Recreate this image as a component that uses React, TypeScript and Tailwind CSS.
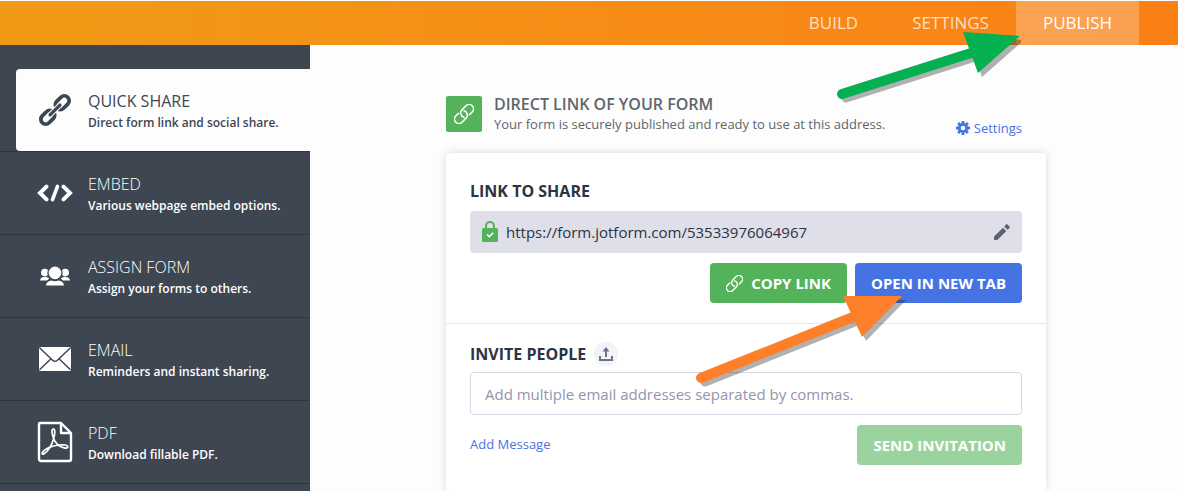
import type { ReactNode } from "react";

type ShareOption = {
  title: string;
  description: string;
  icon: ReactNode;
};

const ChainIcon = () => (
  <svg width="36" height="36" viewBox="-18 -18 36 36" fill="none" aria-hidden="true">
    <g transform="rotate(-45)" stroke="#3e4652">
      <rect x="2.500" y="-4.800" width="15.500" height="9.600" rx="4.800" strokeWidth="3.800" />
      <rect x="-18" y="-4.800" width="15.500" height="9.600" rx="4.800" strokeWidth="3.800" />
      <path d="M-7 0H7" stroke="#fdfdfd" strokeWidth="5.400" strokeLinecap="round" />
      <path d="M-7 0H7" strokeWidth="3.200" strokeLinecap="round" />
    </g>
  </svg>
);

const CodeIcon = () => (
  <svg width="36" height="18" viewBox="0 0 36 18" fill="none" stroke="#fff" strokeWidth="4" strokeLinecap="round" aria-hidden="true">
    <path d="M9.500 2.600 3 9l6.500 6.400M26.500 2.600 33 9l-6.500 6.400" />
    <path d="M20.500 2.400l-5 13.200" strokeWidth="3.600" />
  </svg>
);

const PeopleIcon = () => (
  <svg width="30" height="20" viewBox="0 0 30 20" fill="#fff" aria-hidden="true">
    <circle cx="4.800" cy="6.600" r="3.800" />
    <circle cx="25.200" cy="6.600" r="3.800" />
    <path d="M0 14.600c.3-2.400 1.600-3.500 4.800-3.500 2.200 0 3.500.5 4.300 1.500l-2 2Z" />
    <path d="M30 14.600c-.3-2.400-1.600-3.500-4.800-3.500-2.200 0-3.500.5-4.300 1.500l2 2Z" />
    <circle cx="15" cy="6.900" r="7" stroke="#3e4652" strokeWidth="1.400" />
    <path d="M6 19.500c.4-3.500 2.600-4.600 5.500-5.100 2.200 1.100 4.800 1.100 7 0 2.900.5 5.100 1.600 5.500 5.100Z" />
  </svg>
);

const EnvelopeIcon = () => (
  <svg width="32" height="24" viewBox="0 0 32 24" aria-hidden="true">
    <rect width="32" height="24" rx="1.500" fill="#fff" />
    <path
      d="M.5.8 13.600 13.200q2.400 2.200 4.800 0L31.500.8M.5 22.800l11-10.500M31.500 22.800l-11-10.500"
      fill="none"
      stroke="#3e4652"
      strokeWidth="1.500"
    />
  </svg>
);

const PdfIcon = () => (
  <svg width="36" height="42" viewBox="0 0 36 42" fill="none" stroke="#fff" strokeLinejoin="round" aria-hidden="true">
    <path d="M3 2h21l10 10v26a2 2 0 0 1-2 2H4a2 2 0 0 1-2-2V3a1 1 0 0 1 1-1Z" strokeWidth="2.400" />
    <path d="M24 2v10h10" strokeWidth="2.400" />
    <path
      d="M16.500 8.200c-2 0-1.800 3.200-.8 6.500 1.500 5.500 5.500 11 11.500 12.200 4.600.9 4.700-2.500.5-2.900-6-.5-13.500 1-19.200 4.400-4 2.500-4.200 5.500-1.700 4.500 3.600-1.500 8.200-8.600 10.100-16.200 1-4.200 1.400-8.500-.4-8.500Z"
      strokeWidth="1.700"
    />
  </svg>
);

const LinkIcon = ({ size }: { size: number }) => (
  <svg
    width={size}
    height={size}
    viewBox="-10 -10 20 20"
    fill="none"
    stroke="currentColor"
    strokeWidth="1.600"
    strokeLinecap="round"
    aria-hidden="true"
  >
    <g transform="rotate(-45)">
      <path d="M3.500 4.400H7.200a4.400 4.400 0 0 0 0-8.800H1.500a4.400 4.400 0 0 0-3.800 6.600" />
      <path d="M-3.500-4.400H-7.200a4.400 4.400 0 0 0 0 8.800H-1.500a4.400 4.400 0 0 0 3.800-6.600" />
    </g>
  </svg>
);

const LockIcon = () => (
  <svg width="16" height="22" viewBox="0 0 16 22" fill="none" aria-hidden="true">
    <path d="M4 8V5a4 4 0 0 1 8 0v3" stroke="#54b35a" strokeWidth="2" />
    <rect y="7" width="16" height="14" rx="1.500" fill="#54b35a" />
    <path d="m5 13.500 2.200 2.200 4-4" stroke="#fff" strokeWidth="1.600" />
  </svg>
);

const PencilIcon = () => (
  <svg width="16" height="16" viewBox="0 0 16 16" fill="#5c6377" aria-hidden="true">
    <path d="M0 12.600V16h3.400L12.300 7 9 3.700ZM15.500 3.900a1.200 1.200 0 0 0 0-1.400L13.500.4a1.200 1.200 0 0 0-1.500 0L10.200 2.400l3.400 3.400Z" />
  </svg>
);

const UploadIcon = () => (
  <svg width="14" height="14" viewBox="0 0 14 14" fill="none" stroke="#6c7190" strokeWidth="2" aria-hidden="true">
    <path d="M1 9v4h12V9M7 10V3" />
    <path d="M3.500 4.500 7 0l3.500 4.500Z" fill="#6c7190" stroke="none" />
  </svg>
);

const GearIcon = () => (
  <svg width="14" height="14" viewBox="-7 -7 14 14" fill="none" stroke="#4573e3" aria-hidden="true">
    <circle r="3.700" strokeWidth="2.800" />
    <path
      d="M0-7V-4.500M0 7V4.500M-7 0H-4.500M7 0H4.500M-4.900-4.900l1.700 1.700M4.900 4.900 3.200 3.200M-4.900 4.900l1.700-1.700M4.900-4.900 3.200-3.200"
      strokeWidth="2.800"
    />
  </svg>
);

const PointerArrow = ({ shaft, head, color }: { shaft: string; head: string; color: string }) => (
  <>
    <g transform="translate(4 4)" opacity="0.35" stroke="#222" fill="#222">
      <path d={shaft} strokeWidth="9" strokeLinecap="round" />
      <path d={head} stroke="none" />
    </g>
    <path d={shaft} stroke={color} strokeWidth="10" strokeLinecap="round" />
    <path d={head} fill={color} />
  </>
);

const options: ShareOption[] = [
  { title: "EMBED", description: "Various webpage embed options.", icon: <CodeIcon /> },
  { title: "ASSIGN FORM", description: "Assign your forms to others.", icon: <PeopleIcon /> },
  { title: "EMAIL", description: "Reminders and instant sharing.", icon: <EnvelopeIcon /> },
  { title: "PDF", description: "Download fillable PDF.", icon: <PdfIcon /> },
];

const Header = () => (
  <header className="mt-px flex h-11 shrink-0 justify-end bg-linear-to-r from-[#f19a17] to-[#fb8016] pr-[39px] text-[17px] text-white">
    <nav className="flex">
      <a href="#build" className="flex items-center px-[27px] text-white/75">
        BUILD
      </a>
      <a href="#settings" className="flex items-center px-[27px] text-white/75">
        SETTINGS
      </a>
      <a href="#publish" className="relative flex items-center bg-white/25 px-[27px]">
        PUBLISH
        <svg width="196" height="84" className="pointer-events-none absolute top-6 right-[118px] z-10" fill="none" aria-hidden="true">
          <PointerArrow shaft="M17 69 146 28" head="M138 7 195 11 153 48Z" color="#05b050" />
        </svg>
      </a>
    </nav>
  </header>
);

const Sidebar = () => (
  <nav className="w-[310px] shrink-0 bg-[#3e4652] pt-6">
    <a href="#quick-share" className="flex h-[83px] border-b border-[#2e353d] pl-4 text-[#3e4652]">
      <span className="flex flex-1 items-center rounded-l-sm bg-[#fdfdfd] pl-[21px]">
        <ChainIcon />
        <span className="ml-[15px] flex flex-col gap-0.5 pt-1">
          <span className="text-base leading-5">QUICK SHARE</span>
          <span className="text-xs leading-5 font-semibold">Direct form link and social share.</span>
        </span>
      </span>
    </a>
    {options.map((option) => (
      <a
        key={option.title}
        href={`#${option.title.toLowerCase()}`}
        className="flex h-[83px] items-center border-b border-[#2e353d] pl-[37px] text-white"
      >
        <span className="flex w-9 justify-center">{option.icon}</span>
        <span className="ml-[15px] flex flex-col gap-0.5 pt-1">
          <span className="text-base leading-5 font-light">{option.title}</span>
          <span className="text-xs leading-5 font-semibold">{option.description}</span>
        </span>
      </a>
    ))}
  </nav>
);

const LinkCard = () => (
  <div className="mt-[15px] rounded-sm bg-white pb-[26px] shadow-[0_0_8px_rgba(0,0,0,0.14)]">
    <section className="border-b border-[#e6e6f0] px-6 pt-7 pb-5">
      <h2 className="text-base leading-5 font-bold">LINK TO SHARE</h2>
      <div className="mt-2.5 flex h-[42px] items-center gap-2 rounded-sm bg-[#dedfe8] px-3">
        <LockIcon />
        <input
          aria-label="Form link"
          readOnly
          value="https://form.jotform.com/53533976064967"
          className="min-w-0 flex-1 bg-transparent text-[15px] outline-none"
        />
        <button aria-label="Edit link">
          <PencilIcon />
        </button>
      </div>
      <div className="mt-2.5 flex justify-end gap-2 text-[15px] font-bold text-white">
        <button className="flex h-10 items-center gap-2 rounded-sm bg-[#54b35a] px-4">
          <LinkIcon size={17} />
          COPY LINK
        </button>
        <button className="relative h-10 rounded-sm bg-[#4573e3] px-4">
          OPEN IN NEW TAB
          <svg width="212" height="96" className="pointer-events-none absolute top-[31px] right-[116px] z-10" fill="none" aria-hidden="true">
            <PointerArrow shaft="M7 84 159 23" head="M149 2 208 2 168 43Z" color="#fd7f2a" />
          </svg>
        </button>
      </div>
    </section>
    <section className="px-6 pt-[18px]">
      <div className="flex items-center gap-2">
        <label htmlFor="emails" className="text-base leading-5 font-bold">
          INVITE PEOPLE
        </label>
        <button aria-label="Import contacts" className="flex size-6 items-center justify-center rounded-full bg-[#f2f3f5]">
          <UploadIcon />
        </button>
      </div>
      <input
        id="emails"
        placeholder="Add multiple email addresses separated by commas."
        className="mt-1.5 h-[43px] w-full rounded-sm border border-[#d8d7e8] px-3.5 text-[15px] placeholder:text-[#9395ad]"
      />
      <div className="mt-2.5 flex items-center justify-between">
        <a href="#message" className="text-[13px] text-[#4573e3]">
          Add Message
        </a>
        <button className="h-10 rounded-sm bg-[#9bd39e] px-4 text-[15px] font-bold text-white">SEND INVITATION</button>
      </div>
    </section>
  </div>
);

export default function App() {
  return (
    <div className="flex h-screen flex-col overflow-hidden bg-[#fdfdfd] font-['Open_Sans',sans-serif] text-[#2c3345]">
      <Header />
      <div className="flex min-h-0 flex-1">
        <Sidebar />
        <main className="flex-1 pt-[51px] pl-1">
          <div className="mx-auto max-w-[600px]">
            <div className="flex items-start pr-6 text-[#5e666b]">
              <div className="flex size-9 items-center justify-center rounded-xs bg-[#54b35a] text-white">
                <LinkIcon size={20} />
              </div>
              <div className="-mt-0.5 ml-3 flex-1">
                <h1 className="text-base leading-5 font-semibold">DIRECT LINK OF YOUR FORM</h1>
                <p className="text-[13px] leading-5">Your form is securely published and ready to use at this address.</p>
              </div>
              <a href="#settings" className="mt-[22px] flex items-center gap-1 text-[13px] leading-5 text-[#4573e3]">
                <GearIcon />
                Settings
              </a>
            </div>
            <LinkCard />
          </div>
        </main>
      </div>
    </div>
  );
}
